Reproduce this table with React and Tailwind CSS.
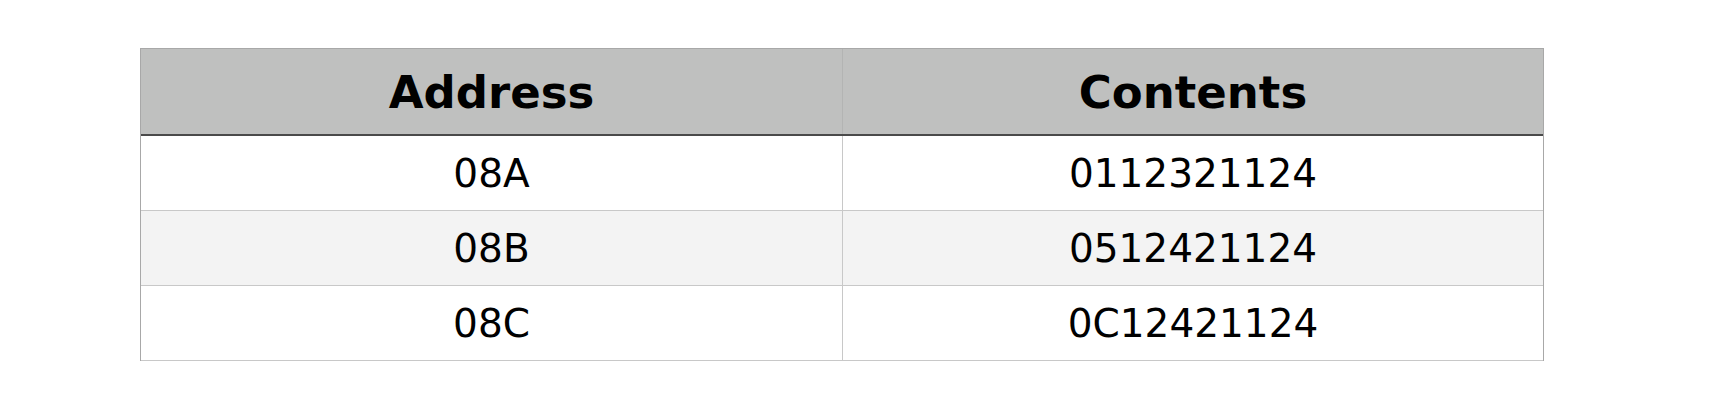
const ROWS = [
  { address: "08A", contents: "0112321124" },
  { address: "08B", contents: "0512421124" },
  { address: "08C", contents: "0C12421124" },
];

export default function App() {
  return (
    <div className="min-h-[400px] bg-white pt-[48px] pl-[140px] font-['DejaVu_Sans',sans-serif] text-black">
      <div className="w-[1404px] border-x border-t border-[#a8a8a8]">
        {/* Header */}
        <div className="grid h-[87px] grid-cols-[702px_1fr] border-b-2 border-[#4a4a4a] bg-[#bfc0bf]">
          <div className="flex items-center justify-center border-r border-[#b3b4b3] pt-[3px] text-[45px] font-bold">
            Address
          </div>
          <div className="flex items-center justify-center pt-[3px] text-[45px] font-bold">
            Contents
          </div>
        </div>

        {/* Rows */}
        {ROWS.map((row, idx) => (
          <div
            key={row.address}
            className={`grid h-[75px] grid-cols-[702px_1fr] border-b border-[#c8c8c8] ${
              idx % 2 === 1 ? "bg-[#f3f3f3]" : "bg-white"
            }`}
          >
            <div className="flex items-center justify-center border-r border-[#c8c8c8] pt-[2px] text-[39px]">
              {row.address}
            </div>
            <div className="flex items-center justify-center pt-[2px] text-[39px]">
              {row.contents}
            </div>
          </div>
        ))}
      </div>
    </div>
  );
}
